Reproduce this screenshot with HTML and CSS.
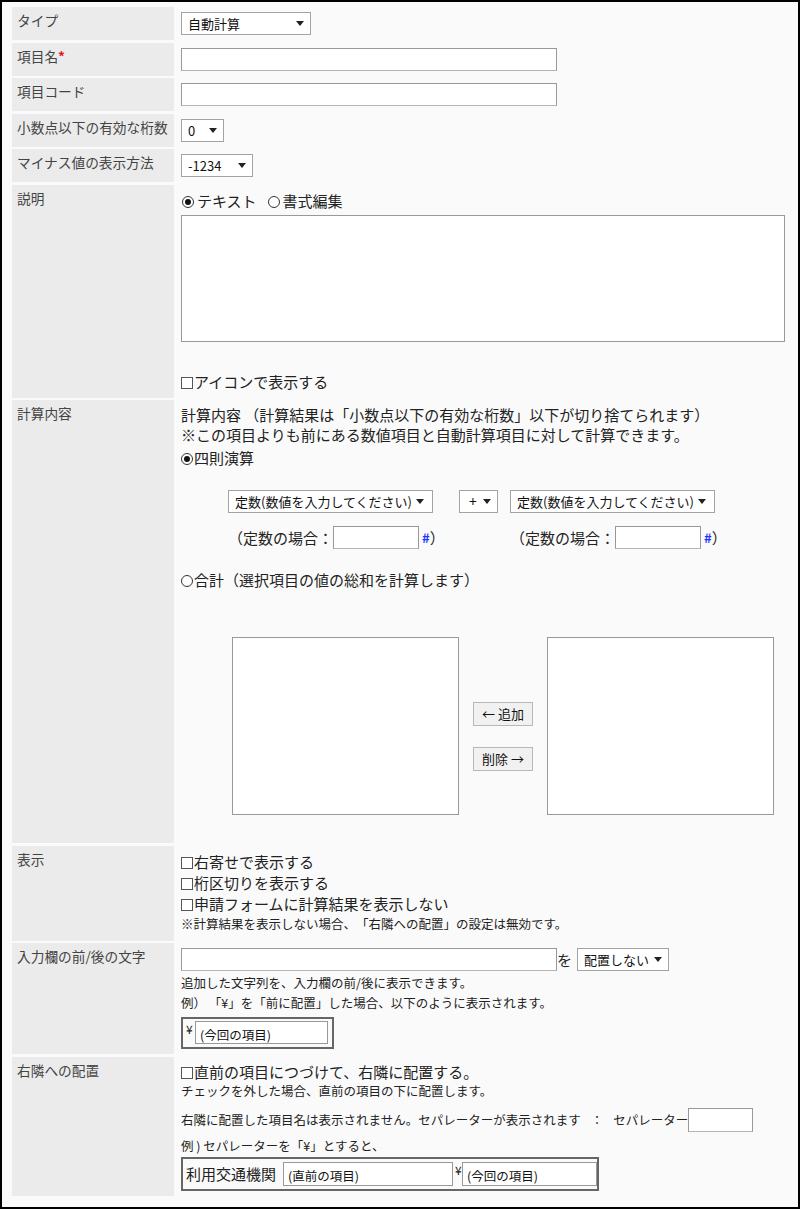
FILE: index.html
```html
<!DOCTYPE html>
<html lang="ja">
<head>
<meta charset="utf-8">
<title>自動計算項目の設定</title>
<link rel="stylesheet" href="styles.css">
</head>
<body>
<div class="frame">
  <div class="form">
    <div class="label">タイプ</div>
    <div class="value">
      <div class="select w-type"><span>自動計算</span><span class="caret"></span></div>
    </div>

    <div class="label">項目名<span class="req">*</span></div>
    <div class="value"><input class="text w-name" type="text"></div>

    <div class="label">項目コード</div>
    <div class="value"><input class="text w-name" type="text"></div>

    <div class="label">小数点以下の有効な桁数</div>
    <div class="value">
      <div class="select w-zero"><span>0</span><span class="caret"></span></div>
    </div>

    <div class="label">マイナス値の表示方法</div>
    <div class="value">
      <div class="select w-minus"><span>-1234</span><span class="caret"></span></div>
    </div>

    <div class="label">説明</div>
    <div class="value desc">
      <div class="radio-line"><span class="radio on"></span><span class="opt">テキスト</span><span class="radio gap"></span><span class="opt">書式編集</span></div>
      <textarea class="memo"></textarea>
      <div class="check-line icon-line"><span class="check"></span>アイコンで表示する</div>
    </div>

    <div class="label">計算内容</div>
    <div class="value calc">
      <div class="line">計算内容 （計算結果は「小数点以下の有効な桁数」以下が切り捨てられます）</div>
      <div class="line">※この項目よりも前にある数値項目と自動計算項目に対して計算できます。</div>
      <div class="line op-line"><span class="radio on"></span>四則演算</div>
      <div class="arith">
        <div class="arith-left">
          <div class="select w-const"><span>定数(数値を入力してください)</span><span class="caret"></span></div>
          <div class="select w-plus"><span>+</span><span class="caret"></span></div>
        </div>
        <div class="select w-const"><span>定数(数値を入力してください)</span><span class="caret"></span></div>
        <div class="const">（定数の場合：<input class="text w-num" type="text"><span class="hash">#</span>）</div>
        <div class="const">（定数の場合：<input class="text w-num" type="text"><span class="hash">#</span>）</div>
      </div>
      <div class="line sum-line"><span class="radio"></span>合計（選択項目の値の総和を計算します）</div>
      <div class="lists">
        <div class="listbox"></div>
        <div class="list-buttons">
          <button class="btn" type="button">← 追加</button>
          <button class="btn" type="button">削除 →</button>
        </div>
        <div class="listbox"></div>
      </div>
    </div>

    <div class="label">表示</div>
    <div class="value show">
      <div class="check-line"><span class="check"></span>右寄せで表示する</div>
      <div class="check-line"><span class="check"></span>桁区切りを表示する</div>
      <div class="check-line"><span class="check"></span>申請フォームに計算結果を表示しない</div>
      <div class="note">※計算結果を表示しない場合、「右隣への配置」の設定は無効です。</div>
    </div>

    <div class="label">入力欄の前/後の文字</div>
    <div class="value affix">
      <div class="affix-line">
        <input class="text w-name" type="text"><span class="wo">を</span>
        <div class="select w-place"><span>配置しない</span><span class="caret"></span></div>
      </div>
      <div class="note">追加した文字列を、入力欄の前/後に表示できます。</div>
      <div class="note">例） 「¥」を「前に配置」した場合、以下のように表示されます。</div>
      <div class="example ex-small"><span class="yen">¥</span><span class="sample w-s1">(今回の項目)</span></div>
    </div>

    <div class="label">右隣への配置</div>
    <div class="value right">
      <div class="check-line"><span class="check"></span>直前の項目につづけて、右隣に配置する。</div>
      <div class="note tight">チェックを外した場合、直前の項目の下に配置します。</div>
      <div class="note sep-line">右隣に配置した項目名は表示されません。セパレーターが表示されます<span class="colon">：</span>セパレーター<input class="text w-sep" type="text"></div>
      <div class="note">例 ) セパレーターを「¥」とすると、</div>
      <div class="example ex-wide"><span class="ex-label">利用交通機関</span><span class="sample w-s2">(直前の項目)</span><span class="yen">¥</span><span class="sample w-s3">(今回の項目)</span></div>
    </div>
  </div>
</div>
</body>
</html>
```

FILE: styles.css
```css
* { box-sizing: border-box; }
html, body { margin: 0; padding: 0; }
body {
  font-family: "Noto Sans CJK JP", "Noto Sans", sans-serif;
  color: #222;
  background: #fff;
  text-spacing-trim: space-all;
}
.frame {
  width: 800px;
  height: 1209px;
  border: 2px solid #000;
  background: #fafafa;
  padding: 5px 10px 0 10px;
}
.form {
  display: grid;
  grid-template-columns: 162px 1fr;
  row-gap: 2.5px;
}
.label {
  background: #ebebeb;
  color: #444;
  font-size: 13.7px;
  line-height: 18px;
  padding: 4px 5px;
  white-space: nowrap;
}
.req { color: #e0191b; font-weight: bold; }
.value {
  padding: 5px 0 5px 7px;
  font-size: 15px;
  line-height: 20px;
  color: #222;
}

/* form controls */
.text {
  display: block;
  height: 23px;
  margin: 0;
  padding: 0 4px;
  border: 1px solid #999;
  border-bottom-color: #b5b5b5;
  background: #fff;
  font: inherit;
  outline: none;
}
.w-name { width: 376px; }
.w-num { width: 86px; display: inline-block; }
.w-sep { width: 65px; height: 24px; display: inline-block; }

.select {
  display: flex;
  align-items: center;
  justify-content: space-between;
  height: 23px;
  border: 1px solid #a3a3a3;
  background: #fff;
  padding: 0 6px 0 6px;
  font-size: 13px;
  line-height: 21px;
  color: #111;
  white-space: nowrap;
}
.caret {
  width: 0;
  height: 0;
  border-left: 4.5px solid transparent;
  border-right: 4.5px solid transparent;
  border-top: 5px solid #222;
  flex: none;
}
.w-type { width: 130px; }
.w-zero { width: 43px; }
.w-minus { width: 72px; }
.w-const { width: 205px; padding: 0 8px 0 6px; }
.w-plus { width: 39px; padding: 0 6px 0 9px; font-size: 14px; }
.w-place { width: 92px; }

.radio {
  display: inline-block;
  width: 12px;
  height: 12px;
  border: 1px solid #333;
  border-radius: 50%;
  background: #fff;
  vertical-align: -1px;
  margin-right: 1px;
  position: relative;
}
.radio.on::after {
  content: "";
  position: absolute;
  left: 2px;
  top: 2px;
  width: 6px;
  height: 6px;
  border-radius: 50%;
  background: #111;
}
.radio.gap { margin-left: 11px; }
.opt { margin-left: 2px; }

.check {
  display: inline-block;
  width: 12px;
  height: 12px;
  border: 1px solid #555;
  background: #fff;
  vertical-align: -1px;
  margin-right: 1px;
}

.note { font-size: 12.5px; line-height: 20px; }

/* 説明 */
.desc { padding-bottom: 6px; }
.radio-line { line-height: 21px; padding-left: 1px; }
.memo {
  display: block;
  width: 604px;
  height: 127px;
  margin: 4px 0 0 0;
  border: 1px solid #999;
  background: #fff;
  resize: none;
  outline: none;
}
.icon-line { margin-top: 30px; }

/* 計算内容 */
.calc { padding-bottom: 28px; }
.op-line { margin-top: 3px; }
.arith {
  display: grid;
  grid-template-columns: 282px auto;
  row-gap: 13px;
  margin: 22px 0 0 47px;
  justify-content: start;
}
.arith-left { display: flex; gap: 26px; }
.const {
  display: flex;
  align-items: center;
  height: 23px;
  white-space: nowrap;
}
.hash {
  color: #1f35ff;
  font-weight: bold;
  font-size: 13px;
  margin: 0 0 0 3px;
}
.sum-line { margin-top: 21px; }
.lists {
  display: flex;
  gap: 14px;
  margin: 47px 0 0 51px;
}
.listbox {
  width: 227px;
  height: 178px;
  border: 1px solid #999;
  background: #fff;
}
.list-buttons {
  display: flex;
  flex-direction: column;
  gap: 21px;
  padding-top: 65px;
}
.btn {
  width: 60px;
  height: 24px;
  padding: 0;
  border: 1px solid #b8b8b8;
  background: #f1f1f1;
  font-family: inherit;
  font-size: 13px;
  line-height: 20px;
  color: #111;
}

/* 表示 */
.show { padding-bottom: 7px; }
.show .check-line { line-height: 21px; }

/* 入力欄 */
.affix-line { display: flex; align-items: center; }
.wo { width: 20px; line-height: 20px; }
.affix .affix-line + .note { margin-top: 2px; }
.example {
  display: inline-flex;
  align-items: flex-start;
  border: 2px solid #666;
  background: #fafafa;
  font-size: 12.5px;
}
.ex-small {
  margin-top: 4px;
  width: 153px;
  height: 32px;
  padding: 2px 0 0 3px;
}
.yen { font-size: 12px; line-height: 16px; width: 9px; }
.sample {
  display: block;
  height: 23px;
  border: 1px solid #999;
  background: #fff;
  line-height: 26px;
  padding-left: 4px;
  font-size: 12.5px;
  color: #111;
}
.w-s1 { width: 133px; }

/* 右隣 */
.right { padding-bottom: 5px; }
.tight { line-height: 18px; }
.sep-line {
  display: flex;
  align-items: center;
  height: 24px;
  margin-top: 8px;
  white-space: nowrap;
}
.colon { margin: 0 10px; }
.sep-line + .note { margin-top: 4px; }
.ex-wide {
  margin-top: 1px;
  width: 418px;
  height: 34px;
  padding: 3px 0 0 3px;
}
.ex-label { font-size: 15px; line-height: 24px; width: 97px; }
.w-s2 { width: 170px; height: 24px; }
.w-s3 { width: 135px; height: 24px; }
.ex-wide .yen { margin-left: 2px; width: 7px; }
```
